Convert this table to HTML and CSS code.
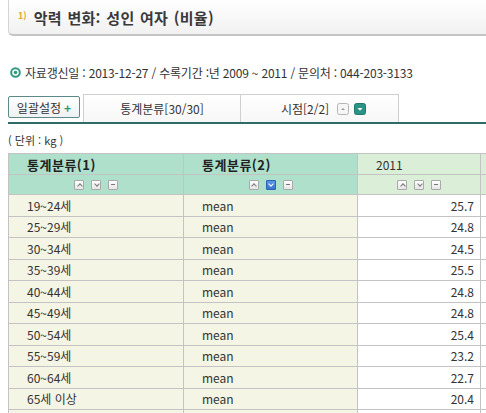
FILE: index.html
```html
<!DOCTYPE html>
<html lang="ko">
<head>
<meta charset="utf-8">
<link rel="stylesheet" href="styles.css">
</head>
<body>
<div class="page">
  <div class="title-box">
    <span class="num">1)</span>
    <h1 class="title">악력 변화: 성인 여자 (비율)</h1>
  </div>

  <div class="info">
    <svg class="dot" width="11" height="11" viewBox="0 0 11 11"><circle cx="5.5" cy="5.5" r="4.3" fill="#fff" stroke="#2f9a7e" stroke-width="2"/><circle cx="5.5" cy="5.5" r="1.8" fill="#2f9a7e"/></svg>
    <span>자료갱신일 : 2013-12-27 / 수록기간 :년 2009 ~ 2011 / 문의처 : 044-203-3133</span>
  </div>

  <div class="tabs">
    <div class="btn-all">일괄설정 <span class="plus">+</span></div>
    <div class="tab tab1">통계분류[30/30]</div>
    <div class="tab tab2">시점[2/2]
      <svg class="ico" width="12" height="12" viewBox="0 0 12 12"><rect x="0.5" y="0.5" width="11" height="11" rx="2" fill="#f6f6f6" stroke="#b5b5b5"/><path d="M4 7 L6 5 L8 7 Z" fill="#999"/></svg>
      <svg class="ico" width="12" height="12" viewBox="0 0 12 12"><rect x="0.5" y="0.5" width="11" height="11" rx="2" fill="#2b9383" stroke="#217a6c"/><path d="M3.5 5 L8.5 5 L6 7.8 Z" fill="#fff"/></svg>
    </div>
  </div>

  <div class="unit">( 단위 : kg )</div>

  <div class="table-wrap">
    <table class="grid">
      <colgroup>
        <col class="c1"><col class="c2"><col class="c3"><col class="c4">
      </colgroup>
      <thead>
        <tr class="h1">
          <th class="hd">통계분류(1)</th>
          <th class="hd">통계분류(2)</th>
          <th class="hy">2011</th>
          <th class="hy"></th>
        </tr>
        <tr class="h2">
          <td class="hd ctl"><span class="sb up"></span><span class="sb dn"></span><span class="sb mn"></span></td>
          <td class="hd ctl"><span class="sb up"></span><span class="sb dn on"></span><span class="sb mn"></span></td>
          <td class="hy ctl"><span class="sb up"></span><span class="sb dn"></span><span class="sb mn"></span></td>
          <td class="hy"></td>
        </tr>
      </thead>
      <tbody>
        <tr><td class="lb">19~24세</td><td class="lb">mean</td><td class="v">25.7</td><td class="v"></td></tr>
        <tr><td class="lb">25~29세</td><td class="lb">mean</td><td class="v">24.8</td><td class="v"></td></tr>
        <tr><td class="lb">30~34세</td><td class="lb">mean</td><td class="v">24.5</td><td class="v"></td></tr>
        <tr><td class="lb">35~39세</td><td class="lb">mean</td><td class="v">25.5</td><td class="v"></td></tr>
        <tr><td class="lb">40~44세</td><td class="lb">mean</td><td class="v">24.8</td><td class="v"></td></tr>
        <tr><td class="lb">45~49세</td><td class="lb">mean</td><td class="v">24.8</td><td class="v"></td></tr>
        <tr><td class="lb">50~54세</td><td class="lb">mean</td><td class="v">25.4</td><td class="v"></td></tr>
        <tr><td class="lb">55~59세</td><td class="lb">mean</td><td class="v">23.2</td><td class="v"></td></tr>
        <tr><td class="lb">60~64세</td><td class="lb">mean</td><td class="v">22.7</td><td class="v"></td></tr>
        <tr><td class="lb">65세 이상</td><td class="lb">mean</td><td class="v">20.4</td><td class="v"></td></tr>
        <tr><td class="lb"></td><td class="lb"></td><td class="v"></td><td class="v"></td></tr>
      </tbody>
    </table>
  </div>
</div>
</body>
</html>
```

FILE: styles.css
```css
html, body {
  margin: 0;
  padding: 0;
  background: #fff;
}
body {
  font-family: "Noto Sans CJK KR", "DejaVu Sans", sans-serif;
  font-size: 12px;
  color: #333;
  width: 486px;
  height: 413px;
  overflow: hidden;
}
.page {
  padding-left: 8px;
}
.title-box {
  height: 37px;
  margin-top: -1px;
  box-sizing: border-box;
  border: 1px solid #d4d4d4;
  border-right: none;
  border-bottom: 2px solid #c4c4c4;
  border-radius: 0 0 0 5px;
  background: linear-gradient(#ffffff, #f1f1f1);
  display: flex;
  align-items: center;
  padding-left: 9px;
  gap: 7px;
}
.num {
  font-size: 9px;
  font-weight: bold;
  color: #e2a92a;
  margin-top: -4px;
}
.title {
  margin: 0;
  font-size: 15px;
  font-weight: bold;
  color: #3a3a3a;
  letter-spacing: 0.3px;
  word-spacing: 1px;
}
.info {
  margin-top: 28px;
  height: 17px;
  display: flex;
  align-items: center;
  gap: 4px;
  padding-left: 2px;
  font-size: 12px;
  color: #333;
  letter-spacing: -0.2px;
}
.tabs {
  margin-top: 12px;
  height: 29px;
  display: flex;
  align-items: flex-end;
  border-bottom: 2px solid #2e6c6a;
}
.btn-all {
  box-sizing: border-box;
  width: 72px;
  height: 22px;
  margin-bottom: 4px;
  border: 1px solid #5c8a88;
  border-radius: 2px;
  background: linear-gradient(#ffffff, #eef2f2);
  display: flex;
  align-items: center;
  justify-content: center;
  gap: 3px;
  font-size: 12px;
  color: #333;
}
.plus {
  color: #2c9a74;
  font-weight: bold;
  font-size: 12px;
}
.tab {
  box-sizing: border-box;
  height: 28px;
  border: 1px solid #cfcfcf;
  border-bottom: none;
  background: linear-gradient(#ffffff, #f7f7f7);
  display: flex;
  align-items: center;
  justify-content: center;
  font-size: 12px;
  color: #333;
}
.tab1 {
  width: 158px;
  margin-left: 3px;
}
.tab2 {
  width: 158px;
  border-left: none;
  padding-left: 8px;
  gap: 5px;
}
.tab2 .ico:first-of-type {
  margin-left: 3px;
}
.unit {
  margin-top: 8px;
  height: 16px;
  font-size: 11px;
  color: #333;
  display: flex;
  align-items: center;
}
.table-wrap {
  margin-top: 5px;
  width: 478px;
  overflow: hidden;
}
.grid {
  border-collapse: collapse;
  table-layout: fixed;
  width: 500px;
  font-size: 12px;
}
.c1 { width: 175px; }
.c2 { width: 174px; }
.c3 { width: 123px; }
.c4 { width: 28px; }
.grid th, .grid td {
  border: 1px solid #c3c3c3;
  padding: 0;
  white-space: nowrap;
  overflow: hidden;
}
.h1 th {
  height: 20px;
  text-align: left;
  padding-left: 18px;
}
.h1 th.hd {
  font-weight: bold;
  font-size: 13px;
  color: #222;
  letter-spacing: 0.5px;
}
.h1 th.hy {
  font-weight: normal;
  color: #333;
}
.hd { background: #aee0cb; }
.hy { background: #dbefd8; }
.h2 td {
  height: 19px;
  text-align: center;
}
.ctl {
  font-size: 0;
}
.sb {
  display: inline-block;
  box-sizing: border-box;
  width: 10px;
  height: 10px;
  margin: 0 3.5px;
  border: 1px solid #a9a9a9;
  border-radius: 1px;
  background: linear-gradient(#ffffff, #e6e6e6);
  vertical-align: middle;
  position: relative;
}
.sb::after {
  content: "";
  position: absolute;
}
.sb.up::after {
  border-left: 1px solid #777;
  border-top: 1px solid #777;
  width: 3px;
  height: 3px;
  left: 2.5px;
  top: 3px;
  transform: rotate(45deg);
}
.sb.dn::after {
  border-right: 1px solid #777;
  border-bottom: 1px solid #777;
  width: 3px;
  height: 3px;
  left: 2.5px;
  top: 1px;
  transform: rotate(45deg);
}
.sb.mn::after {
  width: 4px;
  height: 1px;
  background: #777;
  left: 2px;
  top: 3.5px;
}
.sb.on {
  background: linear-gradient(#5a97e4, #3a76cf);
  border-color: #2d62b3;
}
.sb.on::after {
  border-color: #fff;
}
.grid tbody td {
  height: 20.5px;
  color: #333;
}
.lb {
  background: #f5f5e5;
  padding-left: 18px !important;
  text-align: left;
}
.v {
  background: #fff;
  text-align: right;
  padding-right: 6px !important;
}
```
